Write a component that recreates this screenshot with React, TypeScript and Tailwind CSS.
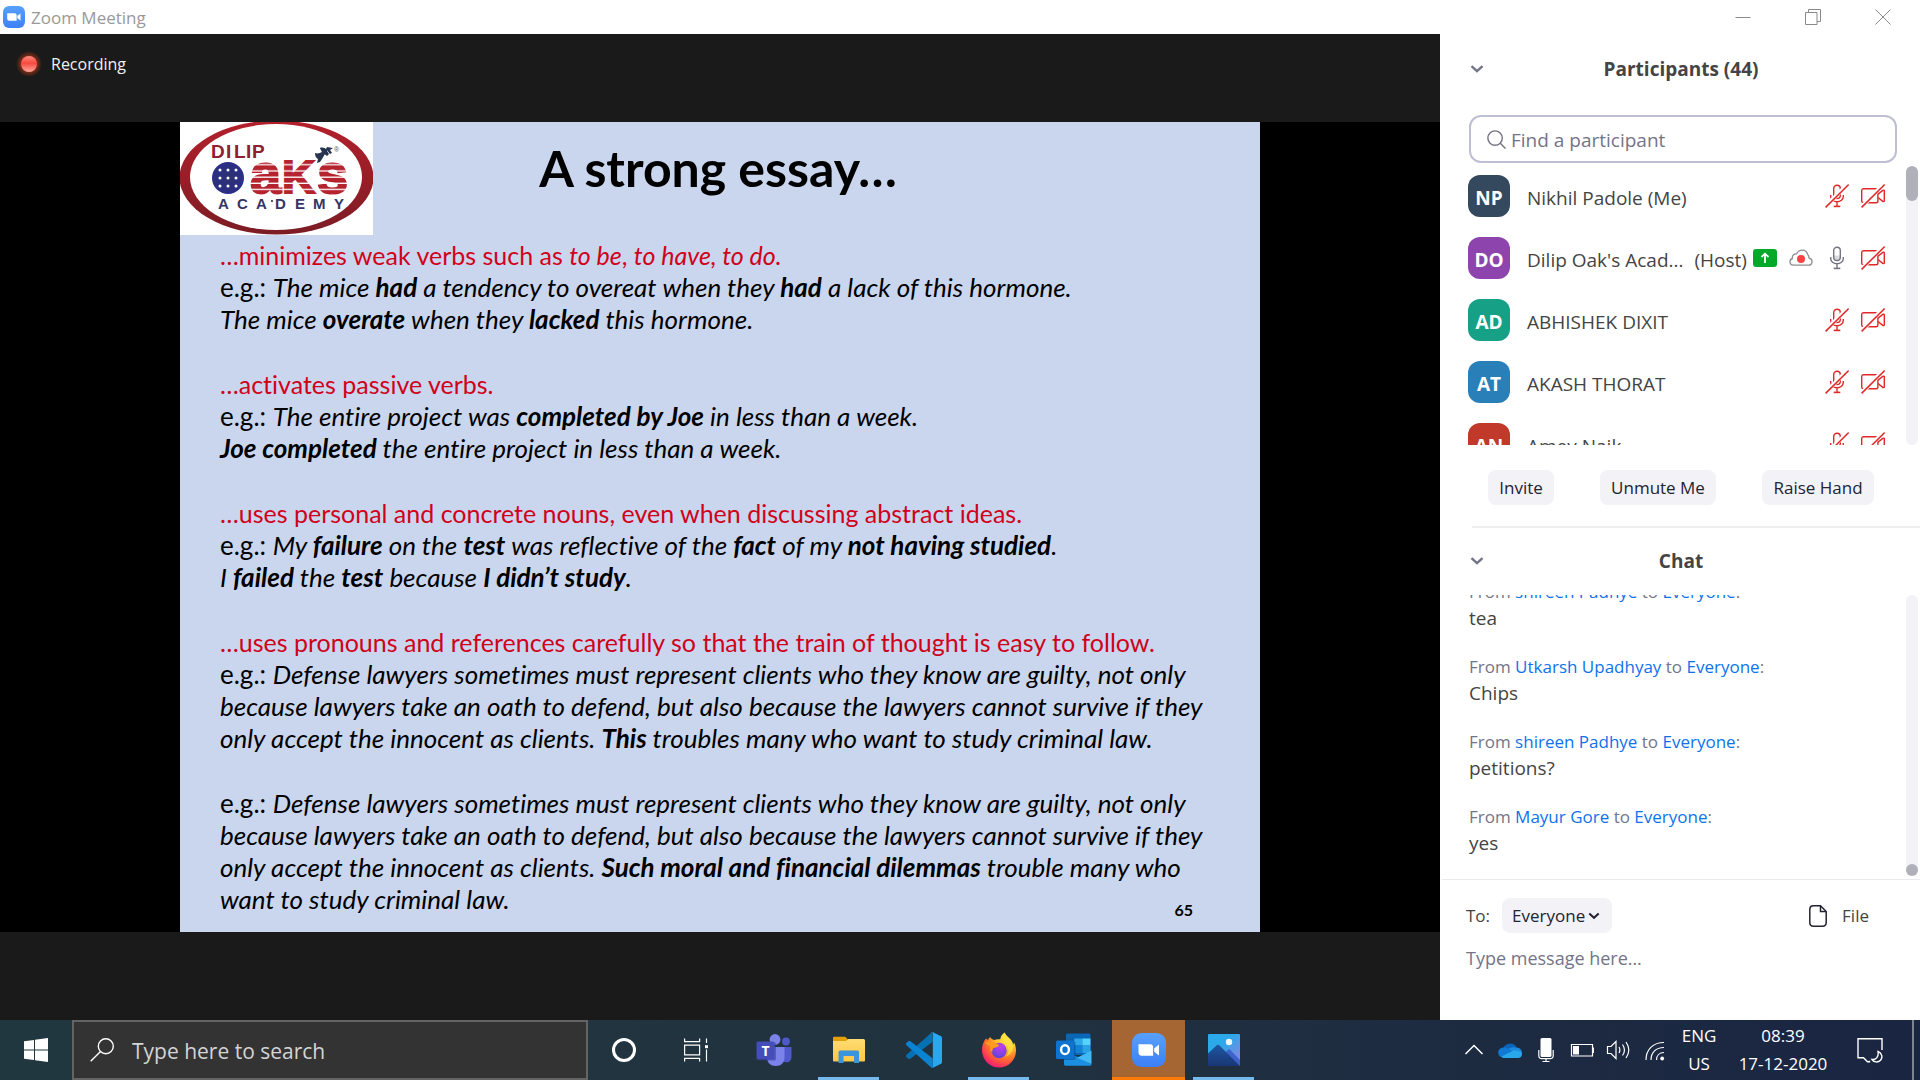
import type { ReactNode } from "react";

const UI = "font-['Open_Sans','Noto_Sans',sans-serif]";

/* ---------- icons ---------- */

function ZoomLogo({ className }: { className: string }) {
  return (
    <svg viewBox="0 0 34 34" className={className} aria-hidden="true">
      <defs>
        <linearGradient id="zoomBlue" x1="0" y1="0" x2="0" y2="1">
          <stop offset="0" stopColor="#58a0fb" />
          <stop offset="1" stopColor="#3c80f6" />
        </linearGradient>
      </defs>
      <rect width="34" height="34" rx="9.5" fill="url(#zoomBlue)" />
      <path d="M6.5 11.3h11.6a3 3 0 0 1 3 3v8.4H9.6a3.1 3.1 0 0 1-3.1-3.1z" fill="#fff" />
      <path d="M22.2 15.200 27 11.6v10.8l-4.8-3.6z" fill="#fff" />
    </svg>
  );
}

function ChevronDown({ className }: { className: string }) {
  return (
    <svg viewBox="0 0 14 8" className={className} fill="none" stroke="currentColor" strokeWidth="2.4" aria-hidden="true">
      <path d="m1.5 1.2 5.5 5 5.5-5" />
    </svg>
  );
}

function MicIcon({ muted }: { muted?: boolean }) {
  return (
    <svg viewBox="0 0 24 24" className={muted ? "size-6 text-[#e02828]" : "size-6 text-[#747480]"} fill="none" stroke="currentColor" strokeWidth="1.4" role="img" aria-label={muted ? "Muted" : "Unmuted"}>
      <rect x="8.7" y="1.2" width="6.6" height="13.3" rx="3.3" />
      {!muted && <path d="M9 9.5h6v2a3 3 0 0 1-6 0z" fill="currentColor" fillOpacity=".25" stroke="none" />}
      <path d="M5.7 11v1.5a6.3 5.3 0 0 0 12.6 0V11M12 18v4.2" />
      <path d="M8.7 22.4h6.6" strokeWidth="1.6" />
      {muted && (
        <>
          <path d="M3 20 20 3" stroke="#fff" strokeWidth="4" />
          <path d="M.6 23.4 23.7.6" strokeWidth="1.5" />
        </>
      )}
    </svg>
  );
}

function CameraOffIcon() {
  return (
    <svg viewBox="0 0 24 24" className="size-6 text-[#e02828]" fill="none" stroke="currentColor" strokeWidth="1.4" role="img" aria-label="Camera off">
      <path d="M2.4 4.7h12.7a1.8 1.8 0 0 1 1.8 1.8V17a1.8 1.8 0 0 1-1.8 1.8H2.4A1.8 1.8 0 0 1 .7 17V6.5a1.8 1.8 0 0 1 1.7-1.8z" />
      <path d="M17 10.3 21.8 6.4c.7-.5 1.5-.2 1.5.6v9.8c0 .8-.8 1.1-1.5.6L17 13.5" />
      <path d="M2.5 21 20 3" stroke="#fff" strokeWidth="4" />
      <path d="M.6 23.4 23.7.6" strokeWidth="1.5" />
    </svg>
  );
}

function CloudRecordIcon() {
  return (
    <svg viewBox="0 0 24 18" className="h-[18px] w-6" fill="none" role="img" aria-label="Cloud recording">
      <path d="M4.5 16.2C2.2 16.2 1 14.8 1 12.8c0-1.6.9-2.9 2.4-3.3C3 6.5 4.7 4.6 7.6 4.8 9 2.3 11 1.1 13.4 1.2c2.6.1 4.6 1.700 5.3 4.2 1 .8 1.3 2 1.2 3.4 2.4.7 3.3 2.2 3.1 4.1-.2 2-1.5 3.300-3.4 3.300z" stroke="#8e8e93" strokeWidth="1.3" />
      <circle cx="12" cy="10" r="4" fill="#fb4141" />
    </svg>
  );
}

function OaksLogo() {
  const dots = [-8, 0, 8];
  return (
    <svg viewBox="0 0 193 113" className="aspect-[193/113] w-[193px]" role="img" aria-label="Dilip Oak's Academy">
      <defs>
        <pattern id="stripes" width="10" height="6.2" patternUnits="userSpaceOnUse">
          <rect width="10" height="6.2" fill="#b5232f" />
          <rect y="4.9" width="10" height="1.300" fill="#fff" />
        </pattern>
        <radialGradient id="ball">
          <stop offset="0" stopColor="#2d3270" />
          <stop offset="1" stopColor="#2b2e86" />
        </radialGradient>
        <linearGradient id="ring" x1="0" y1="0" x2="0" y2="1">
          <stop offset="0" stopColor="#b3202b" />
          <stop offset="1" stopColor="#7c1c24" />
        </linearGradient>
      </defs>
      <rect width="193" height="113" fill="#fff" />
      <ellipse cx="96.5" cy="55.5" rx="97" ry="57" fill="url(#ring)" />
      <ellipse cx="96" cy="55" rx="86" ry="53" fill="#fff" />
      <g fontFamily="'Liberation Sans Narrow', 'Liberation Sans', Arial, sans-serif" fontWeight="700">
        <text x="31 46 54 66 72" y="36" fontSize="19" fill="#8f2030">DILIP</text>
        <text x="38 57 76 95 115 133 154" y="87" fontSize="15" fill="#343566">ACADEMY</text>
      </g>
      <g fontFamily="Liberation Sans, Arial, sans-serif" fontWeight="700" fill="url(#stripes)" stroke="url(#stripes)" strokeWidth="2">
        <text x="70" y="71" fontSize="56">a</text>
        <text x="102" y="71" fontSize="46">K</text>
        <text x="137" y="71" fontSize="56">s</text>
      </g>
      <text x="154" y="30" fontSize="7" fill="#555" fontFamily="Liberation Sans, Arial, sans-serif">®</text>
      <circle cx="92" cy="79" r="1" fill="#222" />
      <circle cx="48" cy="56" r="16" fill="url(#ball)" />
      {dots.map((dx) =>
        dots.map((dy) => <circle key={`${dx},${dy}`} cx={48 + dx} cy={56 + dy} r="1.5" fill="#fff" />),
      )}
      <path d="M135 31c3 1 5 0 7-1l-2-4c2-1 4 0 5 1l3 0-3 5-3 5-2 3-3 1 1-4c-2-1-3-3-3-6z" fill="#26344f" />
      <path d="m140 26 5 0 4 6-2 2-4-3zM147 25l6 1-3 2 2 3-2 1-4-5z" fill="#26344f" />
    </svg>
  );
}

function WindowsLogo() {
  return (
    <svg viewBox="0 0 24 24" className="size-6" fill="#fff" aria-hidden="true">
      <path d="M0 3.3 10 2v9.500H0zM11 1.800 24 0v11.500H11zM0 12.500h10V22L0 20.700zM11 12.500h13V24l-13-1.800z" />
    </svg>
  );
}

function TaskViewIcon() {
  return (
    <svg viewBox="0 0 24 24" className="size-6" fill="none" stroke="#fff" strokeWidth="1.2" aria-hidden="true">
      <path d="M.6.5v3.2h15V.5M.6 7.2h15v9.6h-15zM.6 23.5v-3.2h15v3.2M22.5.5v4.5M22.5 11.5v12" />
      <rect x="21" y="7.2" width="3" height="3" fill="#fff" stroke="none" />
    </svg>
  );
}

function TeamsIcon() {
  return (
    <svg viewBox="0 0 36 34" className="h-[34px] w-9" aria-hidden="true">
      <circle cx="30" cy="8.5" r="3.9" fill="#5059c9" />
      <path d="M25 14h10.500v10c0 3-2 5.300-5 5.300-2.500 0-4.500-1-5.500-3z" fill="#5059c9" />
      <circle cx="19" cy="6.5" r="5.4" fill="#7b83eb" />
      <path d="M11 14h17.500v10.500c0 5-3.500 8.500-8.700 8.500S11 29.500 11 24.500z" fill="#7b83eb" />
      <rect x="2" y="9.5" width="18" height="18" rx="1.5" fill="#2f3791" opacity=".5" />
      <rect x=".5" y="8.5" width="18" height="18" rx="1.5" fill="#454db8" />
      <text x="9.5" y="22.500" textAnchor="middle" fontSize="14" fontWeight="700" fill="#fff" fontFamily="Open Sans, sans-serif">T</text>
    </svg>
  );
}

function ExplorerIcon() {
  return (
    <svg viewBox="0 0 32 28" className="h-7 w-8" aria-hidden="true">
      <defs>
        <linearGradient id="folder" x1="0" y1="0" x2="0" y2="1">
          <stop offset="0" stopColor="#ffdc72" />
          <stop offset="1" stopColor="#fdc843" />
        </linearGradient>
      </defs>
      <path d="M0 2A1.300 1.300 0 0 1 1.300.700h11L14.500 3v3H0z" fill="#e3a008" />
      <path d="M0 5h13l2-2h15.500A1.500 1.500 0 0 1 32 4.500v20a1 1 0 0 1-1 1H1a1 1 0 0 1-1-1z" fill="url(#folder)" />
      <path d="M5.500 16A1.500 1.500 0 0 1 7 14.500h17.500A1.500 1.500 0 0 1 26 16v11h-5v-7H10.500v7h-5z" fill="#3b94dc" />
    </svg>
  );
}

function VsCodeIcon() {
  return (
    <svg viewBox="0 0 100 100" className="size-9" aria-hidden="true">
      <path d="M73 0 1.500 63c-2 1.900-2 5.200 0 7.100l4 3.800c1.700 1.500 4.500 1.600 6.500.1L74 27z" fill="#0570b4" />
      <path d="M1.500 37a5 5 0 0 1 0-7.200l4-3.700c1.700-1.500 4.500-1.600 6.500-.1l62 47v26c-1.500 1-3 .5-4-.5z" fill="#0a84d2" />
      <path d="M75 99c-2 1-4.300.6-6-1 2.200 2.200 5.500.6 5.500-2.500V4.500c0-3.100-3.300-4.700-5.500-2.500 1.700-1.600 4-2 6-1l21 10c2.200 1 4 3.300 4 5.700v66.600c0 2.400-1.800 4.700-4 5.700z" fill="#27a9f1" />
    </svg>
  );
}

function FirefoxIcon() {
  return (
    <svg viewBox="0 0 36 36" className="size-9" aria-hidden="true">
      <defs>
        <radialGradient id="ffBody" cx=".75" cy=".12" r="1">
          <stop offset="0" stopColor="#fff44f" />
          <stop offset=".35" stopColor="#ffc02d" />
          <stop offset=".6" stopColor="#ff7b25" />
          <stop offset=".85" stopColor="#fd3556" />
          <stop offset="1" stopColor="#e3158a" />
        </radialGradient>
        <radialGradient id="ffGlobe" cx=".6" cy=".25" r=".8">
          <stop offset="0" stopColor="#c13df0" />
          <stop offset="1" stopColor="#5b45cf" />
        </radialGradient>
      </defs>
      <path d="M23.5.5c-2.500 1.800-4 4-4.200 6.800-2.300-.3-4.300 0-6.300.7-1.500-.4-2.700-1.300-3.700-2.700-1.500.8-2 1.700-2.100 3L5 6.500C2.300 9.500 1 13.500 1 18c0 9.800 7.500 17.500 17 17.500S35 28 35 18.500c0-3.500-.8-6-2-8-.2 1-.5 1.700-1 2.200C30.500 6.500 25.500 5 23.500.5z" fill="url(#ffBody)" />
      <circle cx="18" cy="18.5" r="7.7" fill="url(#ffGlobe)" />
      <path d="M3.500 11c2.500-1.500 5.500-1.700 8-.7 3 .4 5.500 1.300 6.500 3-.6 1.600-2.500 2-5.300 2.600-1 1-1.800 2.600-1.200 4.600-2.500-2-2.700-4-2-6.200-2-.8-4-2-6-3.300z" fill="#ff9a1f" />
      <path d="M23.5.5c-2.500 4-1.500 8 1.500 11 3 3.500 3.500 9 0 13 6-2.500 8.500-8.500 7-13C30.500 6.500 25.500 5 23.500.5z" fill="#ffe23f" opacity=".75" />
    </svg>
  );
}

function OutlookIcon() {
  return (
    <svg viewBox="0 0 36 34" className="h-[34px] w-9" aria-hidden="true">
      <path d="M10 2A1.500 1.500 0 0 1 11.500.5H33A1.500 1.500 0 0 1 34.500 2v20H10z" fill="#0a67b8" />
      <path d="M10 5.500h8.200v8H10z" fill="#0c62ab" />
      <path d="M18.200 5.500h8.200v7h-8.200z" fill="#2fa8ea" />
      <path d="M26.400 5.500h8.100v7h-8.100z" fill="#55d3fb" />
      <path d="M18.200 12.500h8.200v7.500h-8.200z" fill="#1183d4" />
      <path d="M26.400 12.500h8.100v7.500h-8.100z" fill="#2aa2e8" />
      <path d="M8 17 35.500 31a1.500 1.500 0 0 1-1.500 1.700H9.500A1.500 1.500 0 0 1 8 31z" fill="#1b8fdf" />
      <path d="M35.500 17.500V31L21 24.800z" fill="#41b9f5" />
      <rect x="1.5" y="8.5" width="18" height="18.500" rx="1.5" fill="#083b73" opacity=".45" />
      <rect x="0" y="7.5" width="18" height="18.500" rx="1.5" fill="#0f74cf" />
      <ellipse cx="9" cy="16.700" rx="3.9" ry="4.4" fill="none" stroke="#fff" strokeWidth="2.4" />
    </svg>
  );
}

function PhotosIcon() {
  return (
    <svg viewBox="0 0 32 32" className="size-8" aria-hidden="true">
      <defs>
        <linearGradient id="sky" x1="0" y1="0" x2="1" y2="1">
          <stop offset=".4" stopColor="#2ba9e8" />
          <stop offset="1" stopColor="#a07be0" />
        </linearGradient>
        <linearGradient id="hill" x1="0" y1="0" x2="0" y2="1">
          <stop offset="0" stopColor="#1c57a0" />
          <stop offset="1" stopColor="#1a3674" />
        </linearGradient>
      </defs>
      <rect width="32" height="32" rx="1" fill="url(#sky)" />
      <circle cx="21" cy="8" r="3.2" fill="#f3f6fa" />
      <path d="m16 20 3.500-3.800a2 2 0 0 1 3 0L32 26v6H20z" fill="#3c63cc" />
      <path d="M0 19.500 8.500 11.500a2.200 2.200 0 0 1 3 0L32 32H0z" fill="url(#hill)" />
    </svg>
  );
}

/* ---------- shared slide ---------- */

const Line = ({ children }: { children: ReactNode }) => <span className="block text-[26px] leading-8 whitespace-nowrap italic">{children}</span>;
const Lead = ({ children }: { children: ReactNode }) => <span className="block text-[25px] leading-8 whitespace-nowrap text-[#d0021b]">{children}</span>;
const Eg = () => <span className="not-italic">e.g.: </span>;

function Slide() {
  return (
    <article className="relative flex aspect-[4/3] h-full flex-col bg-[#cad6ee] font-['Lato',sans-serif] text-black [font-variant-ligatures:none]">
      <div className="absolute top-0 left-0"><OaksLogo /></div>
      <header className="h-[14%]">
        <h1 className="pt-4 pr-1 text-center text-[50px] leading-[60px] font-bold">A strong essay…</h1>
      </header>
      <div className="flex flex-1 flex-col gap-[33px] px-10 pt-1">
        <p>
          <Lead>…minimizes weak verbs such as <em>to be</em>, <em>to have, to do.</em></Lead>
          <Line><Eg />The mice <b>had</b> a tendency to overeat when they <b>had</b> a lack of this hormone.</Line>
          <Line>The mice <b>overate</b> when they <b>lacked</b> this hormone.</Line>
        </p>
        <p>
          <Lead>…activates passive verbs.</Lead>
          <Line><Eg />The entire project was <b>completed by Joe</b> in less than a week.</Line>
          <Line><b>Joe completed</b> the entire project in less than a week.</Line>
        </p>
        <p>
          <Lead>…uses personal and concrete nouns, even when discussing abstract ideas.</Lead>
          <Line><Eg />My <b>failure</b> on the <b>test</b> was reflective of the <b>fact</b> of my <b>not having studied</b>.</Line>
          <Line>I <b>failed</b> the <b>test</b> because <b>I didn’t study</b>.</Line>
        </p>
        <p>
          <Lead>…uses pronouns and references carefully so that the train of thought is easy to follow.</Lead>
          <Line><Eg />Defense lawyers sometimes must represent clients who they know are guilty, not only</Line>
          <Line>because lawyers take an oath to defend, but also because the lawyers cannot survive if they</Line>
          <Line>only accept the innocent as clients. <b>This</b> troubles many who want to study criminal law.</Line>
        </p>
        <p>
          <Line><Eg />Defense lawyers sometimes must represent clients who they know are guilty, not only</Line>
          <Line>because lawyers take an oath to defend, but also because the lawyers cannot survive if they</Line>
          <Line>only accept the innocent as clients. <b>Such moral and financial dilemmas</b> trouble many who</Line>
          <Line>want to study criminal law.</Line>
        </p>
      </div>
      <span className="absolute right-[67px] bottom-3 text-base leading-5 font-bold">65</span>
    </article>
  );
}

/* ---------- side panel ---------- */

const participants = [
  { initials: "NP", name: "Nikhil Padole (Me)", color: "bg-[#34495e]" },
  { initials: "DO", name: "Dilip Oak's Acad...", color: "bg-[#8e44ad]", host: true },
  { initials: "AD", name: "ABHISHEK DIXIT", color: "bg-[#16a085]" },
  { initials: "AT", name: "AKASH THORAT", color: "bg-[#2980b9]" },
  { initials: "AN", name: "Amey Naik", color: "bg-[#c0392b]" },
];

const messages = [
  { from: "shireen Padhye", text: "tea" },
  { from: "Utkarsh Upadhyay", text: "Chips" },
  { from: "shireen Padhye", text: "petitions?" },
  { from: "Mayur Gore", text: "yes" },
];

function PanelHeader({ title }: { title: string }) {
  return (
    <header className="grid grid-cols-[74px_1fr_72px] items-center">
      <button type="button" aria-label={`Collapse ${title}`} className="flex justify-center text-[#747487]">
        <ChevronDown className="h-2 w-3.5" />
      </button>
      <h2 className="text-center text-[19px] leading-6 font-bold text-[#444]">{title}</h2>
    </header>
  );
}

const pill = "h-[35px] rounded-lg bg-[#f2f2f7] text-[17px] text-[#232333]";

function Panel() {
  return (
    <aside className="flex w-[480px] shrink-0 flex-col bg-white text-[#444]">
      <section className="flex flex-col">
        <div className="pt-[23px] pb-[34px]"><PanelHeader title="Participants (44)" /></div>
        <label className="mr-[23px] ml-[29px] flex h-12 items-center gap-[5px] rounded-xl border-2 border-[#bfbfd4] px-4">
          <svg viewBox="0 0 20 20" className="size-[19px] text-[#747487]" fill="none" stroke="currentColor" strokeWidth="1.5" aria-hidden="true">
            <circle cx="8.5" cy="8.5" r="7.6" />
            <path d="m14 14 5.500 5.500" />
          </svg>
          <input aria-label="Find a participant" placeholder="Find a participant" className="min-w-0 flex-1 pt-0.5 text-[19px] outline-none placeholder:text-[#747487]" />
        </label>
        <div className="flex h-[282px]">
          <ul className="min-w-0 flex-1 overflow-hidden pt-0.5 pr-[21px] pl-7">
            {participants.map((p) => (
              <li key={p.initials} className="flex h-[62px] items-center">
                <span className={`flex size-[42px] items-center justify-center rounded-xl pt-1 text-[19px] leading-6 font-bold text-white ${p.color}`}>{p.initials}</span>
                <span className="ml-[17px] pt-[3px] text-[19px] leading-6 whitespace-nowrap">{p.name}</span>
                {p.host && (
                  <>
                    <span className="ml-[11px] pt-[3px] text-[19px] leading-6">(Host)</span>
                    <svg viewBox="0 0 24 18" className="mr-3 ml-1.5 h-[18px] w-6 shrink-0" role="img" aria-label="Sharing screen">
                      <rect width="24" height="18" rx="3" fill="#00aa28" />
                      <path d="M12 14V5M8.500 8 12 4.700 15.500 8" fill="none" stroke="#fff" strokeWidth="1.8" />
                    </svg>
                    <CloudRecordIcon />
                  </>
                )}
                <span className="ml-auto flex gap-3"><MicIcon muted={!p.host} /><CameraOffIcon /></span>
              </li>
            ))}
          </ul>
          <div className="mt-[3px] mr-0.5 w-3 rounded-full bg-[#f2f2f7]"><div className="h-[35px] rounded-full bg-[#b0b0b9]" /></div>
        </div>
        <div className="mt-[25px] flex justify-between pr-[46px] pl-12">
          <button type="button" className={`w-[66px] ${pill}`}>Invite</button>
          <button type="button" className={`w-[116px] ${pill}`}>Unmute Me</button>
          <button type="button" className={`w-28 ${pill}`}>Raise Hand</button>
        </div>
      </section>

      <section className="mt-[21px] flex min-h-0 flex-1 flex-col">
        <div className="ml-8 h-0.5 bg-[#eeeef0]" />
        <div className="pt-[21px] pb-[22px]"><PanelHeader title="Chat" /></div>
        <div className="flex min-h-0 flex-1">
          <ol className="flex min-w-0 flex-1 flex-col justify-end gap-[21px] overflow-hidden pb-[18px] pl-[29px]">
            {messages.map((m, i) => (
              <li key={i}>
                <p className="text-[17px] leading-[26px] text-[#747487]">
                  From <span className="text-[#0e72ed]">{m.from}</span> to <span className="text-[#0e72ed]">Everyone</span>:
                </p>
                <p className="pb-0.5 text-[19px] leading-[26px]">{m.text}</p>
              </li>
            ))}
          </ol>
          <div className="mr-0.5 flex w-3 flex-col justify-end rounded-full bg-[#f2f2f7]"><div className="size-3 rounded-full bg-[#b0b0b9]" /></div>
        </div>
        <div className="mt-[3px] ml-0.5 h-px bg-[#e9e9ee]" />
        <div className="flex items-center pt-[18px] pr-[51px] pl-[26px] text-[17px]">
          <label htmlFor="recipient">To:</label>
          <span className="relative ml-3">
            <select id="recipient" className={`w-[110px] appearance-none pr-4 pl-[10px] ${pill}`} defaultValue="Everyone">
              <option>Everyone</option>
            </select>
            <ChevronDown className="pointer-events-none absolute top-3.5 right-3 h-2 w-3 text-[#232333]" />
          </span>
          <button type="button" className="ml-auto flex items-center gap-[15px]">
            <svg viewBox="0 0 18 22" className="h-[22px] w-[18px] text-[#232333]" fill="none" stroke="currentColor" strokeWidth="1.5" aria-hidden="true">
              <path d="M4.500.8h7l5.700 5.700v11c0 2.500-1.200 3.700-3.700 3.700h-9C2 21.200.8 20 .8 17.500v-13C.8 2 2 .8 4.500.8z" />
              <path d="M11.500 1v5.500H17" />
            </svg>
            File
          </button>
        </div>
        <textarea aria-label="Message" placeholder="Type message here…" className="mt-3 h-[75px] resize-none pr-6 pl-[26px] text-lg leading-[26px] outline-none placeholder:text-[#747487]" />
      </section>
    </aside>
  );
}

/* ---------- taskbar ---------- */

const apps = [
  { label: "Teams", icon: <TeamsIcon />, state: "" },
  { label: "File Explorer", icon: <ExplorerIcon />, state: "open" },
  { label: "Visual Studio Code", icon: <VsCodeIcon />, state: "" },
  { label: "Firefox", icon: <FirefoxIcon />, state: "open" },
  { label: "Outlook", icon: <OutlookIcon />, state: "" },
  { label: "Zoom", icon: <ZoomLogo className="size-[34px]" />, state: "alert" },
  { label: "Photos", icon: <PhotosIcon />, state: "open" },
];

function TrayIcon({ label, children }: { label: string; children: ReactNode }) {
  return (
    <button type="button" aria-label={label} className="flex w-9 items-center justify-center">
      <svg viewBox="0 0 24 24" className="size-6" fill="none" stroke="#fff" strokeWidth="1.2">{children}</svg>
    </button>
  );
}

function Taskbar() {
  return (
    <footer className="flex h-[60px] shrink-0 bg-linear-to-r from-[#21373f] via-[#21323f] to-[#1a2542] text-white">
      <button type="button" aria-label="Start" className="flex w-[72px] items-center justify-center"><WindowsLogo /></button>
      <label className="flex w-[516px] items-center border-2 border-[#646464] bg-[#333] pl-4">
        <svg viewBox="0 0 24 24" className="size-6" fill="none" stroke="#fff" strokeWidth="1.4" aria-hidden="true">
          <circle cx="15.8" cy="8.2" r="7.5" />
          <path d="M10.500 13.500.7 23.300" />
        </svg>
        <input aria-label="Search" placeholder="Type here to search" className="ml-[18px] min-w-0 flex-1 pt-1 text-[21px] outline-none placeholder:text-[#d4d4d4]" />
      </label>
      <button type="button" aria-label="Cortana" className="flex w-[72px] items-center justify-center">
        <span className="size-6 rounded-full border-[3px] border-white" />
      </button>
      <button type="button" aria-label="Task view" className="mr-[5px] flex w-[72px] items-center justify-center"><TaskViewIcon /></button>
      <nav className="flex gap-0.5">
        {apps.map((a) => (
          <button key={a.label} type="button" aria-label={a.label} className={`relative flex w-[73px] items-center justify-center ${a.state === "alert" ? "bg-[#a56633]" : ""}`}>
            {a.icon}
            {a.state === "open" && <span className="absolute inset-x-1.5 bottom-0 h-[3px] bg-[#76b9ed]" />}
            {a.state === "alert" && <span className="absolute inset-x-0 bottom-0 h-[3px] bg-[#ff7a05]" />}
          </button>
        ))}
      </nav>
      <div className="ml-auto flex">
        <TrayIcon label="Show hidden icons"><path d="m3.500 16 8.500-8.500 8.500 8.500" strokeWidth="1.5" /></TrayIcon>
        <TrayIcon label="OneDrive">
          <g stroke="none">
            <path d="M5 11a7.500 7.500 0 0 1 13.500-2L12 15z" fill="#0a64b8" />
            <path d="M18 9.500c3.500 0 6 2.200 6 5.500l-8 1-6-4.500c2-2 5-2.700 8-2z" fill="#1b8be0" />
            <path d="M5.500 9.500c2-.3 3.500.3 5 1.300L16 14 3 19c-4-2-4-9 2.500-9.500z" fill="#0f7ad6" />
            <path d="M3 18.800 14.500 13c3-1 8 0 9.300 2 .7 2.500-.8 5-3.800 5H6c-1.200 0-2.200-.4-3-1.200z" fill="#28a8ea" />
          </g>
        </TrayIcon>
        <TrayIcon label="Microphone in use">
          <rect x="6.5" y="0" width="11" height="19" rx="1.5" fill="#fff" stroke="none" />
          <path d="M4.800 12v5.500c0 2 1 3.200 3.200 3.200h8c2.200 0 3.200-1.200 3.200-3.200V12M12 21v2.500M8.500 23.500h7" />
        </TrayIcon>
        <TrayIcon label="Battery">
          <path d="M1.500 6.500h21v11.500h-21z" />
          <path d="M23.500 9.500v5.500" strokeWidth="1.5" />
          <path d="M3 8h6v8.500H3z" fill="#fff" stroke="none" />
        </TrayIcon>
        <TrayIcon label="Volume">
          <path d="M1.500 8.500H5L10 3.500v17L5 15.500H1.500zM13 9c1.200 2 1.200 4 0 6M16.500 6.500c2.500 3.500 2.500 7.500 0 11M20 4c3.500 5 3.500 11 0 16" />
        </TrayIcon>
        <TrayIcon label="Network">
          <path d="M4 22C4 11 11.500 4.500 22 4.500M9 22c0-7.500 5-12.500 13-12.500M14.500 22c0-4.500 3-7.500 7.500-7.500" />
          <circle cx="20.2" cy="20.500" r="1.9" fill="#fff" stroke="none" />
        </TrayIcon>
        <button type="button" className="w-[54px] text-center text-[17px] leading-7">ENG<br />US</button>
        <button type="button" className="w-[114px] text-center text-[17px] leading-7">08:39<br />17-12-2020</button>
        <button type="button" aria-label="Notifications" className="flex w-[60px] items-center justify-center">
          <svg viewBox="0 0 26 26" className="size-[26px]" fill="none" stroke="#fff" strokeWidth="1.4" aria-hidden="true">
            <path d="M25 13V1.700H1v19h5.500l4 4h2v-1" />
            <path d="M21 14.500c4 1.500 5 6 2.500 8.800-2.200 2.300-6.500 2.300-8.500-.8 4 .5 7-3 6-8z" />
          </svg>
        </button>
        <button type="button" aria-label="Show desktop" className="ml-3 w-2 border-l-2 border-[#7c858f]" />
      </div>
    </footer>
  );
}

const windowControls = [
  { label: "Minimize", d: "M.5 8.500h15" },
  { label: "Restore", d: "M.5 3.500h11.500v12H.5zM3.500 3.500v-3h12v12h-3.500" },
  { label: "Close", d: "m.5.5 15 15m0-15-15 15" },
];

export default function App() {
  return (
    <div className={`flex h-screen flex-col overflow-hidden ${UI}`}>
      <header className="flex h-[34px] shrink-0 items-center bg-white pr-0.5 pl-[3px]">
        <ZoomLogo className="size-[22px]" />
        <span className="ml-1.5 pt-0.5 text-[17px] leading-6 text-[#999]">Zoom Meeting</span>
        <div className="ml-auto flex">
          {windowControls.map((c) => (
            <button key={c.label} type="button" aria-label={c.label} className="flex w-[70px] justify-center">
              <svg viewBox="0 0 16 16" className="size-4" fill="none" stroke="#8a8a8a"><path d={c.d} /></svg>
            </button>
          ))}
        </div>
      </header>
      <div className="flex min-h-0 flex-1">
        <main className="flex min-w-0 flex-1 flex-col bg-[#1a1a1a]">
          <div className="flex h-[88px] shrink-0 items-start pt-[17px] pl-4">
            <svg viewBox="0 0 26 26" className="size-[26px]" aria-hidden="true">
              <defs>
                <radialGradient id="glow">
                  <stop offset=".5" stopColor="#9a3217" />
                  <stop offset="1" stopColor="#9a3217" stopOpacity="0" />
                </radialGradient>
                <linearGradient id="lamp" x1="0" y1="0" x2="0" y2="1">
                  <stop offset="0" stopColor="#ff8a80" />
                  <stop offset=".45" stopColor="#f9483c" />
                  <stop offset="1" stopColor="#ffa99f" />
                </linearGradient>
              </defs>
              <circle cx="13" cy="13" r="13" fill="url(#glow)" />
              <circle cx="13" cy="13" r="8" fill="url(#lamp)" />
            </svg>
            <span className="ml-[9px] text-base leading-[26px] text-[#f0f0f0]">Recording</span>
          </div>
          <div className="flex min-h-0 flex-1 justify-center bg-black"><Slide /></div>
          <div className="h-[88px] shrink-0" />
        </main>
        <Panel />
      </div>
      <Taskbar />
    </div>
  );
}
